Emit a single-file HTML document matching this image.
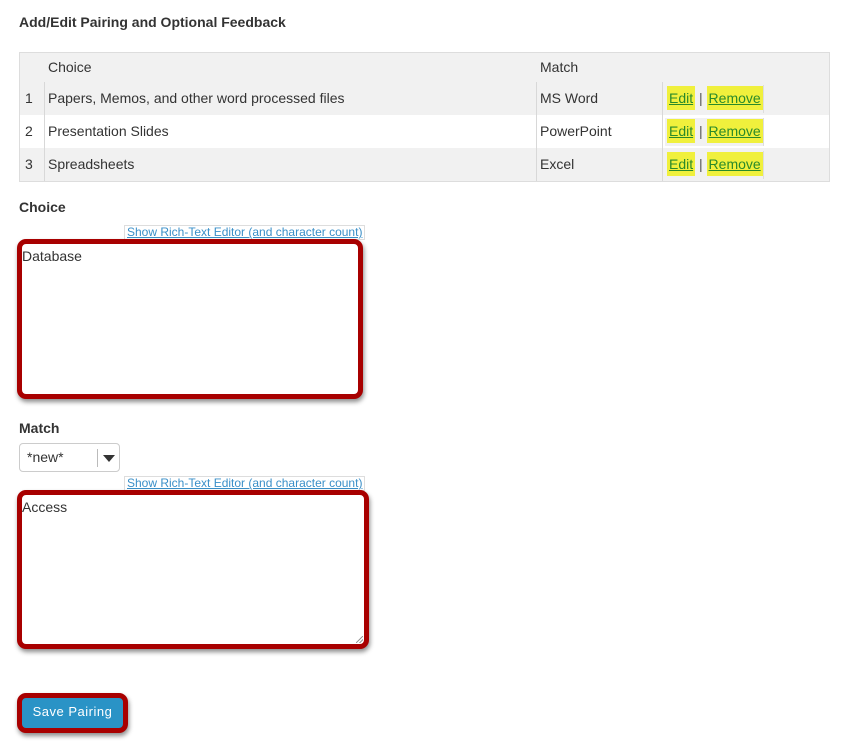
<!DOCTYPE html>
<html><head><meta charset="utf-8">
<style>
*{margin:0;padding:0;box-sizing:border-box}
body{width:841px;height:742px;background:#fff;font-family:"Liberation Sans",Arial,sans-serif;color:#333;position:relative;overflow:hidden}
.a{position:absolute}
h1{position:absolute;left:19px;top:14px;font-size:14px;font-weight:bold;color:#333}
.lbl{position:absolute;left:19px;font-size:14px;font-weight:bold;color:#333}
.tbl{left:19px;top:52px;width:811px;height:130px;border:1px solid #ddd;background:#f1f1f1}
.row{position:absolute;left:0;width:809px;height:33px;font-size:14px;line-height:33px}
.vl{position:absolute;width:1px;background:#d8d8d8}
.c1{position:absolute;left:5px}
.c2{position:absolute;left:28px}
.c3{position:absolute;left:520px}
.lk{position:absolute;left:645px;top:3px;height:28px;width:99px;border-right:1px solid #ddd;font-size:14px;line-height:24px;white-space:nowrap}
.hl{display:inline-block;background:#f0f03c;color:#2a8a2a;text-decoration:underline;padding:0 2px;line-height:24px;margin-top:1px}
.rt{position:absolute;left:124px;font-size:12px;color:#3a8fc8;text-decoration:underline;border:1px solid #ddd;line-height:13px;padding:0 2px;background:#fff}
.box{position:absolute;border:5px solid #a80000;border-radius:9px;box-shadow:1px 3px 5px rgba(0,0,0,.45);background:#fff;font-size:14px}
.box span{position:absolute;left:0px;top:4px}
</style></head><body>
<h1>Add/Edit Pairing and Optional Feedback</h1>
<div class="a tbl">
  <div class="row" style="top:0;height:30px;line-height:28px"><span class="c2">Choice</span><span class="c3">Match</span></div>
  <div class="row" style="top:29px;background:#f1f1f1"><span class="c1">1</span><span class="c2">Papers, Memos, and other word processed files</span><span class="c3">MS Word</span>
    <div class="lk"><span class="hl" style="margin-left:2px">Edit</span> <span style="color:#555">|</span> <span class="hl">Remove</span></div></div>
  <div class="row" style="top:62px;background:#fff"><span class="c1">2</span><span class="c2">Presentation Slides</span><span class="c3">PowerPoint</span>
    <div class="lk" style="background:#f1f1f1"><span class="hl" style="margin-left:2px">Edit</span> <span style="color:#555">|</span> <span class="hl">Remove</span></div></div>
  <div class="row" style="top:95px;background:#f1f1f1"><span class="c1">3</span><span class="c2">Spreadsheets</span><span class="c3">Excel</span>
    <div class="lk"><span class="hl" style="margin-left:2px">Edit</span> <span style="color:#555">|</span> <span class="hl">Remove</span></div></div>
  <div class="vl" style="left:24px;top:29px;height:99px"></div>
  <div class="vl" style="left:516px;top:29px;height:99px"></div>
  <div class="vl" style="left:642px;top:29px;height:99px"></div>
</div>
<div class="lbl" style="top:199px">Choice</div>
<div class="rt" style="top:225px">Show Rich-Text Editor (and character count)</div>
<div class="box" style="left:17px;top:239px;width:346px;height:160px"><span>Database</span></div>
<div class="lbl" style="top:420px">Match</div>
<div class="a" style="left:19px;top:443px;width:101px;height:29px;border:1px solid #ccc;border-radius:4px;font-size:14px;line-height:27px;padding-left:7px;color:#333">*new*
  <div class="a" style="left:77px;top:5px;width:1px;height:18px;background:#bbb"></div>
  <div class="a" style="left:83px;top:11px;width:0;height:0;border-left:6px solid transparent;border-right:6px solid transparent;border-top:7px solid #333"></div>
</div>
<div class="rt" style="top:476px">Show Rich-Text Editor (and character count)</div>
<div class="box" style="left:17px;top:490px;width:352px;height:159px"><span>Access</span>
  <div class="a" style="right:1px;bottom:1px;width:7px;height:7px;background:linear-gradient(135deg,transparent 45%,#999 45%,#999 55%,transparent 55%,transparent 70%,#999 70%,#999 80%,transparent 80%)"></div></div>
<div class="a" style="left:17px;top:693px;width:111px;height:40px;border:5px solid #a80000;border-radius:9px;box-shadow:1px 3px 5px rgba(0,0,0,.45);background:#2a93c6;color:#fff;font-size:13px;line-height:27px;text-align:center;letter-spacing:.5px">Save Pairing</div>
</body></html>
